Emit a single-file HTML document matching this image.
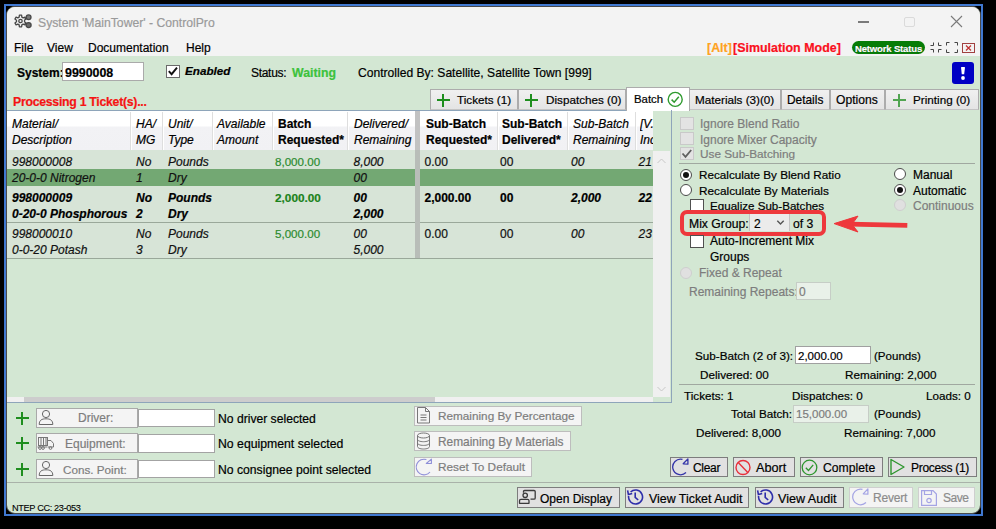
<!DOCTYPE html>
<html><head><meta charset="utf-8">
<style>
*{box-sizing:border-box}
html,body{margin:0;padding:0}
body{width:996px;height:529px;background:#000;position:relative;overflow:hidden;font-family:"Liberation Sans",sans-serif;font-size:12px;color:#000}
.a{position:absolute}
.t{position:absolute;white-space:nowrap;line-height:16px;font-size:12px;-webkit-text-stroke:0.2px currentColor}
.b{font-weight:bold}
.i{font-style:italic}
#frame{left:4px;top:4px;width:979px;height:512px;border:2px solid #4078d0}
#win{left:6px;top:6px;width:975px;height:508px;border-radius:9px;background:#d3e7d3;overflow:hidden;border:1px solid #4a4a4a}
#title{left:0;top:0;width:973px;height:49px;background:#f3f3f3}

.tab{position:absolute;top:89px;height:21px;background:linear-gradient(#f0f0f0,#e4e4e4);border:1px solid #acacac;border-bottom-color:#c4c4c4}
.plus{position:absolute;width:12.5px;height:12.5px}
.plus:before{content:"";position:absolute;left:0;top:5.25px;width:12.5px;height:2px;background:#1e8e1e}
.plus:after{content:"";position:absolute;left:5.25px;top:0;width:2px;height:12.5px;background:#1e8e1e}
.hd{position:absolute;top:111px;height:39px;background:linear-gradient(#fff 0,#fff 15px,#f2f2f5 16px,#f1f1f4 100%)}
.hs{position:absolute;top:112px;width:1px;height:38px;background:#dedede;box-shadow:1px 0 0 #fff}
.ht{position:absolute;white-space:nowrap;line-height:16px;font-size:12px;top:116px;-webkit-text-stroke:0.2px currentColor}
.r{position:absolute;white-space:nowrap;line-height:16px;font-size:12px;font-style:italic;color:#111;-webkit-text-stroke:0.2px currentColor}

.cb{position:absolute;width:14px;height:13px;background:#fff;border:1px solid #505050}
.cbd{position:absolute;width:14px;height:13px;background:#e3e3e3;border:1px solid #c9c9c9}
.rd{position:absolute;width:12px;height:12px;border-radius:50%;background:#fff;border:1px solid #4a4a4a}
.rdd{position:absolute;width:12px;height:12px;border-radius:50%;background:#e0e0e0;border:1px solid #cfcfcf}
.dot{position:absolute;width:6px;height:6px;border-radius:50%;background:#111}
.gray{color:#7d7d7d}

.btn{position:absolute;background:#e1e1e1;border:1px solid #7d7d7d}
.btnd{position:absolute;background:#f4f4f4;border:1px solid #bdbdbd}
.tb{position:absolute;background:#fff;border:1px solid #a3a3a3}
</style></head><body>
<div id="frame" class="a"></div>
<div id="win" class="a"><div id="title" class="a"></div></div>

<!-- title bar -->
<div class="t" style="left:38px;top:15px;color:#9a9a9a;font-size:12.2px">System 'MainTower' - ControlPro</div>
<!-- menu -->
<div class="t" style="left:14px;top:40px">File</div>
<div class="t" style="left:47px;top:40px">View</div>
<div class="t" style="left:88px;top:40px">Documentation</div>
<div class="t" style="left:186px;top:40px">Help</div>


<!-- gear icon -->
<svg class="a" style="left:12px;top:10px" width="24" height="22" viewBox="0 0 24 22"><g stroke="#484848" stroke-width="1.3" stroke-linejoin="round"><path d="M7.37 5.21 L9.63 5.21 L9.83 7.12 L11.19 7.91 L12.95 7.13 L14.08 9.08 L12.52 10.22 L12.52 11.78 L14.08 12.92 L12.95 14.87 L11.19 14.09 L9.83 14.88 L9.63 16.79 L7.37 16.79 L7.17 14.88 L5.81 14.09 L4.05 14.87 L2.92 12.92 L4.48 11.78 L4.48 10.22 L2.92 9.08 L4.05 7.13 L5.81 7.91 L7.17 7.12 Z" fill="none"/><circle cx="8.5" cy="11.0" r="1.7" fill="none"/><path d="M12.6 9.2 L14.5 8.2 M12.6 12.8 L14.5 13.8" fill="none"/><circle cx="16.6" cy="7.3" r="2.4" fill="#7a7a7a"/><circle cx="16.6" cy="15.1" r="2.5" fill="#6a6a6a"/></g></svg>
<!-- window controls -->
<div class="a" style="left:858px;top:21px;width:10.5px;height:1.6px;background:#7a7a7a"></div>
<div class="a" style="left:904px;top:16.5px;width:10.5px;height:10px;border:1.2px solid #dadada;border-radius:2px"></div>
<svg class="a" style="left:950px;top:15px" width="13" height="13" viewBox="0 0 13 13"><path d="M1 1 L12 12 M12 1 L1 12" stroke="#7a7a7a" stroke-width="1.1"/></svg>

<!-- menu right -->
<div class="t b" style="left:707px;top:40px;color:#ffa21e;font-size:12.4px">[Alt]</div>
<div class="t b" style="left:733px;top:40px;color:#fa1020;font-size:12.45px">[Simulation Mode]</div>
<div class="a" style="left:852px;top:41px;width:73px;height:13px;border-radius:6.5px;background:#077d07"></div>
<div class="t b" style="left:855px;top:41px;color:#fff;font-size:9.5px;letter-spacing:-0.15px;text-shadow:0 0 1px #030">Network Status</div>
<svg class="a" style="left:930px;top:42px" width="12" height="11" viewBox="0 0 12 11"><path d="M3.5 0.5 V3.5 H0.5 M8.5 0.5 V3.5 H11.5 M0.5 7.5 H3.5 V10.5 M11.5 7.5 H8.5 V10.5" fill="none" stroke="#444" stroke-width="1"/></svg>
<svg class="a" style="left:946px;top:42px" width="12" height="11" viewBox="0 0 12 11"><path d="M0.5 3.5 V0.5 H3.5 M8.5 0.5 H11.5 V3.5 M0.5 7.5 V10.5 H3.5 M11.5 7.5 V10.5 H8.5" fill="none" stroke="#444" stroke-width="1"/></svg>
<div class="a" style="left:962px;top:43px;width:13px;height:10px;border:1.5px solid #a04040"></div>
<svg class="a" style="left:965px;top:45px" width="7" height="6" viewBox="0 0 7 6"><path d="M1 0.5 L6 5.5 M6 0.5 L1 5.5" stroke="#c03030" stroke-width="1.2"/></svg>

<!-- toolbar -->
<div class="t b" style="left:17px;top:65px">System:</div>
<div class="a" style="left:62px;top:62px;width:82px;height:18.5px;background:#fff;border:1px solid #aaaaaa"></div>
<div class="t b" style="left:65px;top:65px;font-size:12.4px">9990008</div>
<div class="a" style="left:166px;top:64.5px;width:14px;height:13.5px;background:#fff;border:1px solid #6a6a6a"></div>
<svg class="a" style="left:166px;top:64px" width="14" height="14" viewBox="0 0 14 14"><path d="M2.8 7.2 L5.6 10.2 L11 3.6" fill="none" stroke="#111" stroke-width="1.9"/></svg>
<div class="t b i" style="left:185px;top:63px;font-size:11.7px">Enabled</div>
<div class="t" style="left:251px;top:65px;letter-spacing:-0.3px">Status:</div>
<div class="t b" style="left:292px;top:65px;color:#3cc23c;font-size:12.3px">Waiting</div>
<div class="t" style="left:358px;top:65px;font-size:12.1px">Controlled By: Satellite, Satellite Town [999]</div>
<div class="a" style="left:952px;top:62px;width:22px;height:22px;background:#0000c4;border-radius:3px"></div>
<svg class="a" style="left:958px;top:66px" width="10" height="16" viewBox="0 0 10 16"><path d="M3 1.6 Q3 1 3.6 1 H6.4 Q7 1 7 1.6 L6.2 8.3 H3.8 Z" fill="#fff"/><circle cx="5" cy="12" r="1.9" fill="#fff"/></svg>

<div class="t b" style="left:13px;top:94px;color:#f51414;font-size:12.3px;letter-spacing:-0.28px">Processing 1 Ticket(s)...</div>

<!-- tabs -->
<div class="tab" style="left:430px;width:88px"></div>
<div class="plus" style="left:437px;top:94px"></div>
<div class="t" style="left:457px;top:92px;font-size:11.7px">Tickets (1)</div>
<div class="tab" style="left:518px;width:108px"></div>
<div class="plus" style="left:525px;top:94px"></div>
<div class="t" style="left:546px;top:92px;font-size:11.7px">Dispatches (0)</div>
<div class="tab" style="left:689px;width:92px"></div>
<div class="t" style="left:695px;top:92px;font-size:11.7px">Materials (3)(0)</div>
<div class="tab" style="left:781px;width:49px"></div>
<div class="t" style="left:787px;top:92px;font-size:11.9px">Details</div>
<div class="tab" style="left:830px;width:55px"></div>
<div class="t" style="left:836px;top:92px;font-size:12.1px">Options</div>
<div class="tab" style="left:885px;width:94px"></div>
<div class="plus" style="left:893px;top:94px;opacity:.75"></div>
<div class="t" style="left:913px;top:92px;font-size:11.7px">Printing (0)</div>

<!-- grid panel -->
<div class="a" style="left:7px;top:110px;width:619px;height:1px;background:#8ea5ba"></div>
<div class="a" style="left:626px;top:87px;width:64px;height:24px;background:#fff;border:1px solid #acacac;border-bottom:none"></div>
<div class="t" style="left:634px;top:91px;font-size:11.4px">Batch</div>
<svg class="a" style="left:667px;top:91px" width="17" height="17" viewBox="0 0 17 17"><circle cx="8.2" cy="8.4" r="7" fill="none" stroke="#2e9a2e" stroke-width="1.4"/><path d="M4.6 8.6 L7.2 11.2 L11.8 5.8" fill="none" stroke="#2e9a2e" stroke-width="1.5"/></svg>
<div class="a" style="left:653px;top:111px;width:18px;height:292px;background:#d3e7d3"></div>
<div class="a" style="left:671px;top:110px;width:1px;height:293px;background:#8ea5ba"></div>
<div class="a" style="left:7px;top:402px;width:665px;height:1px;background:#8ea5ba"></div>

<div class="hd" style="left:7px;width:646px"></div>
<div class="hs" style="left:130px"></div>
<div class="hs" style="left:162px"></div>
<div class="hs" style="left:212px"></div>
<div class="hs" style="left:272px"></div>
<div class="hs" style="left:347px"></div>
<div class="hs" style="left:497px"></div>
<div class="hs" style="left:567px"></div>
<div class="hs" style="left:635px"></div>
<div class="a" style="left:415px;top:111px;width:5px;height:147px;background:#c2c2c2"></div>

<div class="ht i" style="left:12px">Material/<br>Description</div>
<div class="ht i" style="left:136px">HA/<br>MG</div>
<div class="ht i" style="left:168px">Unit/<br>Type</div>
<div class="ht i" style="left:217px">Available<br>Amount</div>
<div class="ht b" style="left:278px">Batch<br>Requested*</div>
<div class="ht i" style="left:354px">Delivered/<br>Remaining</div>
<div class="ht b" style="left:426px">Sub-Batch<br>Requested*</div>
<div class="ht b" style="left:502px">Sub-Batch<br>Delivered*</div>
<div class="ht i" style="left:573px">Sub-Batch<br>Remaining</div>
<div class="ht i" style="left:640px;width:13px;overflow:hidden">[V...<br>Inc</div>

<!-- rows -->
<div class="a" style="left:7px;top:150px;width:646px;height:108px;background:#d7e4d7"></div>
<div class="a" style="left:7px;top:169px;width:646px;height:17px;background:#73a873"></div>
<div class="a" style="left:7px;top:222px;width:646px;height:1px;background:#9aa89a"></div>
<div class="a" style="left:7px;top:258px;width:646px;height:1px;background:#9aa89a"></div>
<div class="a" style="left:415px;top:150px;width:5px;height:108px;background:#b8bdb8"></div>

<!-- row text -->
<div class="r" style="left:12px;top:154px">998000008</div>
<div class="r" style="left:136px;top:154px">No</div>
<div class="r" style="left:168px;top:154px">Pounds</div>
<div class="r" style="left:275px;top:154px;font-style:normal;color:#2b8b2e;font-size:11.6px">8,000.00</div>
<div class="r" style="left:353.5px;top:154px">8,000</div>
<div class="r" style="left:424.5px;top:154px;font-style:normal">0.00</div>
<div class="r" style="left:500px;top:154px;font-style:normal">00</div>
<div class="r" style="left:571px;top:154px">00</div>
<div class="r" style="left:638.5px;top:154px">21</div>
<div class="r" style="left:12px;top:170px">20-0-0 Nitrogen</div>
<div class="r" style="left:136px;top:170px">1</div>
<div class="r" style="left:168px;top:170px">Dry</div>
<div class="r" style="left:353.5px;top:170px">00</div>
<div class="r" style="left:12px;top:190px;font-weight:bold;color:#000">998000009</div>
<div class="r" style="left:136px;top:190px;font-weight:bold;color:#000">No</div>
<div class="r" style="left:168px;top:190px;font-weight:bold;color:#000">Pounds</div>
<div class="r" style="left:275px;top:190px;font-weight:bold;color:#000;font-style:normal;color:#1a821a;font-size:11.8px">2,000.00</div>
<div class="r" style="left:353.5px;top:190px;font-weight:bold;color:#000">00</div>
<div class="r" style="left:424.5px;top:190px;font-weight:bold;color:#000;font-style:normal">2,000.00</div>
<div class="r" style="left:500px;top:190px;font-weight:bold;color:#000;font-style:normal">00</div>
<div class="r" style="left:571px;top:190px;font-weight:bold;color:#000">2,000</div>
<div class="r" style="left:638.5px;top:190px;font-weight:bold;color:#000">22</div>
<div class="r" style="left:12px;top:206px;font-weight:bold;color:#000">0-20-0 Phosphorous</div>
<div class="r" style="left:136px;top:206px;font-weight:bold;color:#000">2</div>
<div class="r" style="left:168px;top:206px;font-weight:bold;color:#000">Dry</div>
<div class="r" style="left:353.5px;top:206px;font-weight:bold;color:#000">2,000</div>
<div class="r" style="left:12px;top:226px">998000010</div>
<div class="r" style="left:136px;top:226px">No</div>
<div class="r" style="left:168px;top:226px">Pounds</div>
<div class="r" style="left:275px;top:226px;font-style:normal;color:#2b8b2e;font-size:11.6px">5,000.00</div>
<div class="r" style="left:353.5px;top:226px">00</div>
<div class="r" style="left:424.5px;top:226px;font-style:normal">0.00</div>
<div class="r" style="left:500px;top:226px;font-style:normal">00</div>
<div class="r" style="left:571px;top:226px">00</div>
<div class="r" style="left:638.5px;top:226px">23</div>
<div class="r" style="left:12px;top:242px">0-0-20 Potash</div>
<div class="r" style="left:136px;top:242px">3</div>
<div class="r" style="left:168px;top:242px">Dry</div>
<div class="r" style="left:353.5px;top:242px">5,000</div>

<div class="a" style="left:653px;top:151px;width:17px;height:246px;background:#f0f0f0"></div>
<svg class="a" style="left:656px;top:157px" width="11" height="8" viewBox="0 0 11 8"><path d="M1.5 6 L5.5 2 L9.5 6" fill="none" stroke="#c8c8c8" stroke-width="1"/></svg>
<svg class="a" style="left:656px;top:385px" width="11" height="8" viewBox="0 0 11 8"><path d="M1.5 2 L5.5 6 L9.5 2" fill="none" stroke="#c8c8c8" stroke-width="1"/></svg>
<div class="a" style="left:7px;top:397px;width:646px;height:5px;background:#f0f0f0"></div>
<div class="a" style="left:24px;top:397px;width:411px;height:5px;background:#cdcdcd"></div>

<!-- right panel -->
<div class="cbd" style="left:680px;top:117px"></div>
<div class="t gray" style="left:700px;top:116px">Ignore Blend Ratio</div>
<div class="cbd" style="left:680px;top:132px"></div>
<div class="t gray" style="left:700px;top:131.5px">Ignore Mixer Capacity</div>
<div class="cbd" style="left:680px;top:147px"></div>
<svg class="a" style="left:680px;top:147px" width="14" height="13" viewBox="0 0 14 13"><path d="M2.5 6.5 L5.5 9.8 L11.2 3" fill="none" stroke="#606060" stroke-width="1.8"/></svg>
<div class="t gray" style="left:700px;top:146px;font-size:11.8px">Use Sub-Batching</div>
<div class="a" style="left:679px;top:163px;width:296px;height:1px;background:#a0a8a0"></div>

<div class="rd" style="left:680px;top:169px"></div><div class="dot" style="left:683px;top:172px"></div>
<div class="t" style="left:699px;top:167px;font-size:11.7px">Recalculate By Blend Ratio</div>
<div class="rd" style="left:680px;top:184px"></div>
<div class="t" style="left:699px;top:183px;font-size:11.8px">Recalculate By Materials</div>
<div class="cb" style="left:690px;top:199px"></div>
<div class="t" style="left:710px;top:198px;font-size:11.6px">Equalize Sub-Batches</div>

<div class="rd" style="left:894px;top:168px"></div>
<div class="t" style="left:913px;top:167px">Manual</div>
<div class="rd" style="left:894px;top:184px"></div><div class="dot" style="left:897px;top:187px"></div>
<div class="t" style="left:913px;top:183px">Automatic</div>
<div class="rdd" style="left:894px;top:199px"></div>
<div class="t gray" style="left:913px;top:198px">Continuous</div>

<div class="a" style="left:749px;top:214px;width:41px;height:17px;background:#ebebeb;border-left:1.5px solid #c4c4c4;border-right:1.5px solid #c4c4c4"></div>
<div class="a" style="left:680px;top:210px;width:146px;height:25.5px;border:4px solid #ee383c;border-radius:7px"></div>
<div class="t" style="left:689px;top:216px;font-size:12.2px">Mix Group:</div>
<div class="t" style="left:754px;top:216px">2</div>
<svg class="a" style="left:776px;top:219px" width="9" height="7" viewBox="0 0 9 7"><path d="M1.3 1.8 L4.5 5 L7.7 1.8" fill="none" stroke="#555" stroke-width="1.4"/></svg>
<div class="t" style="left:793px;top:216px;font-size:12.2px">of 3</div>
<svg class="a" style="left:830px;top:210px" width="82" height="26" viewBox="0 0 82 26"><path d="M20 14.2 L77.3 15.3" stroke="#ee383c" stroke-width="4.8"/><path d="M4.1 13.6 L28 6.1 L22 14.3 L28 22 Z" fill="#ee383c" stroke="#ee383c" stroke-width="1" stroke-linejoin="round"/></svg>

<div class="cb" style="left:690px;top:235px"></div>
<div class="t" style="left:710px;top:233px">Auto-Increment Mix</div>
<div class="t" style="left:710px;top:249px">Groups</div>
<div class="rdd" style="left:680px;top:266.5px"></div>
<div class="t gray" style="left:699px;top:265px">Fixed &amp; Repeat</div>
<div class="t gray" style="left:689px;top:284px">Remaining Repeats:</div>
<div class="a" style="left:796px;top:282px;width:35px;height:18px;background:#e9f1e9;border:1px solid #c6cdc6"></div>
<div class="t gray" style="left:799px;top:284px">0</div>

<div class="t" style="left:695px;top:348px;font-size:11.7px">Sub-Batch (2 of 3):</div>
<div class="a" style="left:795px;top:346px;width:76px;height:18px;background:#fff;border:1px solid #a0a0a0"></div>
<div class="t" style="left:798px;top:348px;font-size:11.5px">2,000.00</div>
<div class="t" style="left:874px;top:348px;font-size:11.55px">(Pounds)</div>
<div class="t" style="left:700px;top:367px;font-size:11.7px">Delivered: 00</div>
<div class="t" style="left:845px;top:367px;font-size:11.7px">Remaining: 2,000</div>
<div class="a" style="left:679px;top:384px;width:296px;height:1px;background:#a0a8a0"></div>
<div class="t" style="left:684px;top:388px;font-size:11.7px">Tickets: 1</div>
<div class="t" style="left:792px;top:388px;font-size:11.7px">Dispatches: 0</div>
<div class="t" style="left:926px;top:388px;font-size:11.7px">Loads: 0</div>
<div class="t" style="left:731px;top:406px;font-size:11.7px">Total Batch:</div>
<div class="a" style="left:793px;top:405px;width:76px;height:18px;background:#e9f1e9;border:1px solid #c6cdc6"></div>
<div class="t gray" style="left:796px;top:406px;font-size:11.5px">15,000.00</div>
<div class="t" style="left:874px;top:406px;font-size:11.55px">(Pounds)</div>
<div class="t" style="left:696px;top:425px;font-size:11.7px">Delivered: 8,000</div>
<div class="t" style="left:844px;top:425px;font-size:11.7px">Remaining: 7,000</div>

<!-- bottom left -->
<div class="plus" style="left:16px;top:412px"></div>
<div class="btnd" style="left:36px;top:408px;width:102px;height:20px;border-color:#a9a9a9"></div>
<svg class="a" style="left:38px;top:409px" width="16" height="17" viewBox="0 0 16 17"><circle cx="8" cy="5" r="3.6" fill="none" stroke="#666" stroke-width="1"/><path d="M1.2 15.5 C1.2 11 4 9.8 8 9.8 C12 9.8 14.8 11 14.8 15.5 Z" fill="none" stroke="#666" stroke-width="1" stroke-linejoin="round"/></svg>
<div class="t gray" style="left:78px;top:410px">Driver:</div>
<div class="tb" style="left:138px;top:409px;width:77px;height:18px"></div>
<div class="t" style="left:218px;top:411px;font-size:12.15px">No driver selected</div>

<div class="plus" style="left:16px;top:437px"></div>
<div class="btnd" style="left:36px;top:433px;width:102px;height:20px;border-color:#a9a9a9"></div>
<svg class="a" style="left:37px;top:437px" width="18" height="13" viewBox="0 0 18 13"><g fill="none" stroke="#777" stroke-width="1"><rect x="1.5" y="0.5" width="9" height="8"/><path d="M4 0.5 V8.5 M6.5 0.5 V8.5 M9 0.5 V8.5"/><path d="M10.5 3.5 H14 L16.5 6.5 V10 H10.5"/><path d="M0.5 10 H10"/><circle cx="3" cy="11" r="1.4"/><circle cx="6" cy="11" r="1.4"/><circle cx="13.5" cy="11" r="1.4"/></g></svg>
<div class="t gray" style="left:65px;top:436px">Equipment:</div>
<div class="tb" style="left:138px;top:434px;width:77px;height:19px"></div>
<div class="t" style="left:218px;top:436px;font-size:12.25px">No equipment selected</div>

<div class="plus" style="left:16px;top:463px"></div>
<div class="btnd" style="left:36px;top:459px;width:102px;height:20px;border-color:#a9a9a9"></div>
<svg class="a" style="left:38px;top:460px" width="16" height="17" viewBox="0 0 16 17"><circle cx="8" cy="5" r="3.6" fill="none" stroke="#666" stroke-width="1"/><path d="M1.2 15.5 C1.2 11 4 9.8 8 9.8 C12 9.8 14.8 11 14.8 15.5 Z" fill="none" stroke="#666" stroke-width="1" stroke-linejoin="round"/></svg>
<div class="t gray" style="left:63px;top:462px;font-size:11.7px">Cons. Point:</div>
<div class="tb" style="left:138px;top:460px;width:77px;height:18px"></div>
<div class="t" style="left:218px;top:462px;font-size:12.2px">No consignee point selected</div>

<div class="btnd" style="left:414px;top:406px;width:168px;height:20px"></div>
<svg class="a" style="left:416px;top:407px" width="15" height="17" viewBox="0 0 15 17"><g fill="none" stroke="#777" stroke-width="1"><path d="M1.5 0.5 H9.5 L13.5 4.5 V16 H1.5 Z"/><path d="M9.5 0.5 V4.5 H13.5"/><path d="M4.5 8 H10.5 M4.5 10.5 H10.5 M4.5 13 H10.5"/></g></svg>
<div class="t gray" style="left:438px;top:408px;font-size:11.75px">Remaining By Percentage</div>
<div class="btnd" style="left:414px;top:431px;width:157px;height:20px"></div>
<svg class="a" style="left:416px;top:432px" width="15" height="18" viewBox="0 0 15 18"><g fill="none" stroke="#777" stroke-width="1"><ellipse cx="7.5" cy="3.5" rx="6" ry="2.5"/><path d="M1.5 3.5 V14.5 C1.5 16 4 17 7.5 17 C11 17 13.5 16 13.5 14.5 V3.5"/><path d="M1.5 7.2 C1.5 8.7 4 9.7 7.5 9.7 C11 9.7 13.5 8.7 13.5 7.2"/><path d="M1.5 10.9 C1.5 12.4 4 13.4 7.5 13.4 C11 13.4 13.5 12.4 13.5 10.9"/></g></svg>
<div class="t gray" style="left:438px;top:434px;font-size:11.9px">Remaining By Materials</div>
<div class="btnd" style="left:414px;top:457px;width:118px;height:20px"></div>
<svg class="a" style="left:415px;top:458px" width="18" height="18" viewBox="0 0 18 18"><g fill="none" stroke="#8e8ed8" stroke-width="1.1" stroke-linejoin="round"><path d="M11.4 1.6 A7.8 7.8 0 1 0 15 14"/><path d="M11.3 5.5 L16.4 1.2 L16.4 5.5 Z"/></g></svg>
<div class="t gray" style="left:438px;top:459px;font-size:11.8px">Reset To Default</div>

<div class="a" style="left:7px;top:482px;width:973px;height:1px;background:#a9b2a9"></div>
<div class="t" style="left:12px;top:500.5px;font-size:9.2px;letter-spacing:-0.35px;line-height:14px;-webkit-text-stroke:0.1px">NTEP CC: 23-053</div>

<!-- action buttons -->
<div class="btn" style="left:670px;top:457px;width:58px;height:20px"></div>
<svg class="a" style="left:671px;top:458px" width="18" height="18" viewBox="0 0 18 18"><g fill="none" stroke="#3434a8" stroke-width="1.3" stroke-linejoin="round"><path d="M11.5 1.4 A7.8 7.8 0 1 0 15 14.5"/><path d="M12.2 5.8 L16.9 0.9 L16.9 6.2 Z"/></g></svg>
<div class="t" style="left:693px;top:460px;letter-spacing:-0.3px">Clear</div>
<div class="btn" style="left:733px;top:457px;width:62px;height:20px"></div>
<svg class="a" style="left:735px;top:459px" width="16" height="17" viewBox="0 0 16 17"><g fill="none" stroke="#e8303a" stroke-width="1.4"><circle cx="8" cy="8.5" r="7"/><path d="M3.2 3.6 L12.8 13.4"/></g></svg>
<div class="t" style="left:756px;top:460px;font-size:12.7px">Abort</div>
<div class="btn" style="left:800px;top:457px;width:83px;height:20px"></div>
<svg class="a" style="left:801px;top:459px" width="17" height="17" viewBox="0 0 17 17"><g fill="none" stroke="#2e962e" stroke-width="1.3"><circle cx="8.5" cy="8.5" r="7.3"/><path d="M4.8 8.8 L7.5 11.5 L12.2 5.8"/></g></svg>
<div class="t" style="left:823px;top:460px;font-size:12.2px">Complete</div>
<div class="btn" style="left:888px;top:457px;width:89px;height:20px"></div>
<svg class="a" style="left:889px;top:458px" width="17" height="18" viewBox="0 0 17 18"><path d="M2 1.5 L15 9 L2 16.5 Z" fill="none" stroke="#2e962e" stroke-width="1.4" stroke-linejoin="round"/></svg>
<div class="t" style="left:911px;top:460px;letter-spacing:-0.3px">Process (1)</div>

<div class="btn" style="left:517px;top:487px;width:103px;height:21px"></div>
<svg class="a" style="left:518px;top:489px" width="19" height="16" viewBox="0 0 19 16"><g fill="none" stroke="#3a3a3a" stroke-width="1.3" stroke-linejoin="round"><path d="M5.5 3.8 V2.6 Q5.5 1.5 6.6 1.5 H16 Q17.2 1.5 17.2 2.6 V9 Q17.2 10.2 16 10.2 H12.5"/><circle cx="7.2" cy="6.3" r="2.2"/><path d="M1.5 14.3 V11.8 Q1.5 10.4 2.9 10.4 H9.6 Q11 10.4 11 11.8 V14.3 Z"/></g></svg>
<div class="t" style="left:540px;top:491px">Open Display</div>
<div class="btn" style="left:625px;top:487px;width:124px;height:21px"></div>
<svg class="a" style="left:626px;top:488px" width="18" height="18" viewBox="0 0 18 18"><g fill="none" stroke="#2e2eaa" stroke-width="1.6"><path d="M2.6 8 A7 7 0 1 0 4.6 4"/><path d="M1.6 2.4 L2.4 6.4 L6.2 5.4"/><path d="M9.2 4.6 V9.4 L12.2 12"/></g></svg>
<div class="t" style="left:649px;top:491px;font-size:12.4px">View Ticket Audit</div>
<div class="btn" style="left:755px;top:487px;width:89px;height:21px"></div>
<svg class="a" style="left:756px;top:488px" width="18" height="18" viewBox="0 0 18 18"><g fill="none" stroke="#2e2eaa" stroke-width="1.6"><path d="M2.6 8 A7 7 0 1 0 4.6 4"/><path d="M1.6 2.4 L2.4 6.4 L6.2 5.4"/><path d="M9.2 4.6 V9.4 L12.2 12"/></g></svg>
<div class="t" style="left:778px;top:491px;font-size:12.6px">View Audit</div>
<div class="btnd" style="left:849px;top:487px;width:64px;height:21px;border-color:#cfcfcf"></div>
<svg class="a" style="left:851px;top:488px" width="18" height="18" viewBox="0 0 18 18"><g fill="none" stroke="#a4a4e4" stroke-width="1.2" stroke-linejoin="round"><path d="M11.5 1.4 A7.8 7.8 0 1 0 15 14.5"/><path d="M12.2 5.8 L16.9 0.9 L16.9 6.2 Z"/></g></svg>
<div class="t gray" style="left:873px;top:490px;letter-spacing:-0.18px;color:#8c8c8c">Revert</div>
<div class="btnd" style="left:918px;top:487px;width:57px;height:21px;border-color:#cfcfcf"></div>
<svg class="a" style="left:921px;top:490px" width="16" height="16" viewBox="0 0 16 16"><g fill="none" stroke="#a4a4e4" stroke-width="1.2"><path d="M0.6 0.6 H12 L15.4 4 V15.4 H0.6 Z"/><path d="M3.5 0.6 V4.5 H10.5 V0.6"/><circle cx="8" cy="10.5" r="2.2"/></g></svg>
<div class="t gray" style="left:943px;top:490px;letter-spacing:-0.5px;color:#8c8c8c">Save</div>
</body></html>
